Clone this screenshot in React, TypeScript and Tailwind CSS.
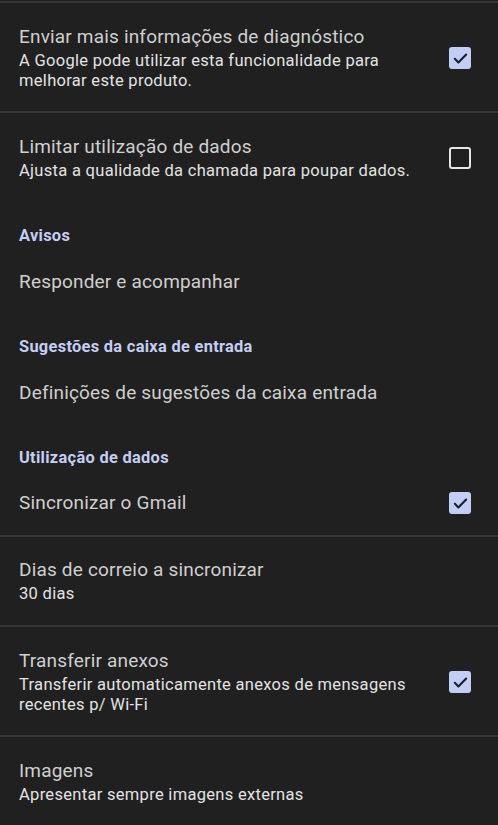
import React from 'react';

interface SettingRow {
  kind: 'item' | 'header';
  title: string;
  summary?: string[];
  checked?: boolean;
  pad?: string;
  divider?: boolean;
}

const rows: SettingRow[] = [
  {
    kind: 'item',
    title: 'Enviar mais informações de diagnóstico',
    summary: ['A Google pode utilizar esta funcionalidade para', 'melhorar este produto.'],
    checked: true,
    pad: 'pt-[22px] pb-[20px]',
    divider: true,
  },
  {
    kind: 'item',
    title: 'Limitar utilização de dados',
    summary: ['Ajusta a qualidade da chamada para poupar dados.'],
    checked: false,
    pad: 'pt-[22px] pb-[24px]',
  },
  { kind: 'header', title: 'Avisos' },
  { kind: 'item', title: 'Responder e acompanhar', pad: 'py-[22px]' },
  { kind: 'header', title: 'Sugestões da caixa de entrada' },
  { kind: 'item', title: 'Definições de sugestões da caixa entrada', pad: 'py-[22px]' },
  { kind: 'header', title: 'Utilização de dados' },
  {
    kind: 'item',
    title: 'Sincronizar o Gmail',
    checked: true,
    pad: 'pt-[21px] pb-[20px]',
    divider: true,
  },
  {
    kind: 'item',
    title: 'Dias de correio a sincronizar',
    summary: ['30 dias'],
    pad: 'pt-[21px] pb-[21px]',
    divider: true,
  },
  {
    kind: 'item',
    title: 'Transferir anexos',
    summary: ['Transferir automaticamente anexos de mensagens', 'recentes p/ Wi-Fi'],
    checked: true,
    pad: 'pt-[22px] pb-[20px]',
    divider: true,
  },
  {
    kind: 'item',
    title: 'Imagens',
    summary: ['Apresentar sempre imagens externas'],
    pad: 'pt-[22px] pb-[22px]',
  },
];

const Checkbox: React.FC<{ checked: boolean }> = ({ checked }) =>
  checked ? (
    <div className="w-[22px] h-[22px] rounded-[3px] bg-[#c3cef7] flex items-center justify-center">
      <svg width="17" height="17" viewBox="0 0 24 24" fill="none">
        <path d="M4 12.5l5 5L20 6.5" stroke="#1b1e2c" strokeWidth="3" strokeLinecap="round" strokeLinejoin="round" />
      </svg>
    </div>
  ) : (
    <div className="w-[22px] h-[22px] rounded-[3px] border-[2.5px] border-[#e6e6e6]" />
  );

const App: React.FC = () => {
  return (
    <div
      className="min-h-[825px] bg-[#202020] pt-px"
      style={{ fontFamily: 'Roboto, "Noto Sans", sans-serif' }}
    >
      <div className="h-[2px] bg-[#363636]" />
      {rows.map((row, i) => (
        <div key={i}>
          {row.kind === 'header' ? (
            <div className="px-[19px] pt-[21px] pb-[2px] text-[16.4px] leading-[20px] tracking-[0.3px] font-bold text-[#c4cef5]">
              {row.title}
            </div>
          ) : (
            <div className={`flex items-center pl-[19px] pr-[27px] ${row.pad}`}>
              <div className="flex-1 min-w-0">
                <div className="text-[19px] leading-[24px] tracking-[0.18px] text-[#cfcfcf]">{row.title}</div>
                {row.summary && (
                  <div className="mt-[2px] text-[16.5px] leading-[20px] tracking-[0.3px] text-[#e3e3e3]">
                    {row.summary.map((line, j) => (
                      <div key={j} className="whitespace-nowrap">{line}</div>
                    ))}
                  </div>
                )}
              </div>
              {row.checked !== undefined && <Checkbox checked={row.checked} />}
            </div>
          )}
          {row.divider && <div className="h-[2px] bg-[#363636]" />}
        </div>
      ))}
    </div>
  );
};

export default App;
